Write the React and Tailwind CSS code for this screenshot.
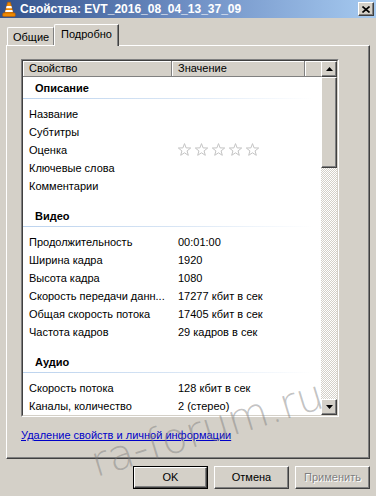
import React from "react";

const raised =
  "border border-t-white border-l-white border-r-[#404040] border-b-[#404040] shadow-[inset_-1px_-1px_0_#808080]";

function Star() {
  return (
    <svg width="15" height="14" viewBox="0 0 15 14" className="block">
      <polygon
        points="7.5,0.6 9.1,4.9 13.7,5 10.1,7.9 11.3,12.3 7.5,9.8 3.7,12.3 4.9,7.9 1.3,5 5.9,4.9"
        fill="white"
        stroke="#c4c4c4"
        strokeWidth="1"
        strokeLinejoin="round"
      />
    </svg>
  );
}

function VlcIcon() {
  return (
    <svg width="14" height="16" viewBox="0 0 14 16" className="block">
      <path d="M5.6 1.2 L8.4 1.2 L11.2 12 L2.8 12 Z" fill="#f08a00" stroke="#b85c00" strokeWidth="0.6" />
      <path d="M4.6 5 L9.4 5 L10 7.2 L4 7.2 Z" fill="#ffffff" />
      <path d="M3.6 9 L10.4 9 L10.9 11 L3.1 11 Z" fill="#ffffff" />
      <path d="M1 12 L13 12 L13.4 14.6 Q13.4 15.4 12.5 15.4 L1.5 15.4 Q0.6 15.4 0.6 14.6 Z" fill="#f08a00" stroke="#b85c00" strokeWidth="0.6" />
    </svg>
  );
}

function Row({ label, value, children }) {
  return (
    <div className="flex h-[18px] items-center">
      <div className="w-[149px] shrink-0 truncate pl-[6px] pr-[2px]">{label}</div>
      <div className="pl-[6px] whitespace-nowrap">{children ?? value}</div>
    </div>
  );
}

function Group({ title, first, children }) {
  return (
    <div className={first ? "mt-[2px]" : "mt-[12px]"}>
      <div className="flex h-[18px] items-center pl-[12px] font-bold">{title}</div>
      <div className="mt-px h-px w-[290px] bg-gradient-to-r from-[#bcd3ee] via-[#d6e4f4] to-white" />
      <div className="mt-[6px]">{children}</div>
    </div>
  );
}

function Button({ children, isDefault, disabled }) {
  const inner = (
    <div
      className={`flex h-full w-full items-center justify-center ${raised} ${
        disabled ? "text-[#808080] [text-shadow:1px_1px_0_#ffffff]" : "text-black"
      }`}
    >
      {children}
    </div>
  );
  if (isDefault) {
    return <div className="h-[23px] w-[75px] border border-black">{inner}</div>;
  }
  return <div className="h-[23px] w-[75px]">{inner}</div>;
}

export default function App() {
  return (
    <div className="relative h-[496px] w-[376px] overflow-hidden bg-[#d4d0c8] font-['Liberation_Sans',Arial,sans-serif] text-[11px] leading-[13px] text-black">
      {/* Title bar */}
      <div className="flex h-[18px] items-center bg-gradient-to-r from-[#33528c] via-[#6f8fc4] to-[#a6caf0] pl-[2px] pr-[2px]">
        <VlcIcon />
        <div className="ml-[4px] text-[12px] font-bold text-white whitespace-nowrap">
          Свойства: EVT_2016_08_04_13_37_09
        </div>
        <div className="ml-auto flex h-[14px] w-[16px] items-center justify-center bg-[#d4d0c8] border border-t-white border-l-white border-r-[#404040] border-b-[#404040] shadow-[inset_-1px_-1px_0_#808080]">
          <svg width="8" height="7" viewBox="0 0 8 7" className="block">
            <path d="M0.5 0.5 L7.5 6.5 M7.5 0.5 L0.5 6.5" stroke="black" strokeWidth="1.6" />
          </svg>
        </div>
      </div>

      {/* Tabs */}
      <div className="flex h-[27px] items-end pl-[7px]">
        <div className="h-[18px] w-[47px] rounded-tl-[2px] border-t border-l border-t-white border-l-white border-r border-r-[#808080] pl-[5px] pt-[3px]">
          Общие
        </div>
        <div className="relative z-10 -mb-px h-[22px] w-[65px] rounded-tl-[2px] border-t border-l border-t-white border-l-white border-r border-r-[#404040] bg-[#d4d0c8] pl-[6px] pt-[3px] shadow-[inset_-1px_0_0_#808080]">
          Подробно
        </div>
      </div>

      {/* Panel */}
      <div className={`ml-[6px] h-[414px] w-[364px] ${raised}`}>
        {/* List box */}
        <div className="ml-[14px] mt-[13px] h-[358px] w-[318px] border border-t-[#808080] border-l-[#808080] border-r-white border-b-white">
          <div className="flex h-full w-full border border-t-[#404040] border-l-[#404040] border-r-[#d4d0c8] border-b-[#d4d0c8] bg-white">
            <div className="flex min-w-0 flex-1 flex-col overflow-hidden">
              {/* Header */}
              <div className="flex h-[16px] shrink-0 bg-[#d4d0c8] border-b border-b-[#808080]">
                <div className="flex w-[149px] items-center border-r border-r-[#808080] pl-[6px] shadow-[inset_1px_1px_0_#ffffff]">
                  Свойство
                </div>
                <div className="flex w-[133px] items-center border-r border-r-[#808080] pl-[6px] shadow-[inset_1px_1px_0_#ffffff]">
                  Значение
                </div>
                <div className="flex-1 shadow-[inset_1px_1px_0_#ffffff]" />
              </div>

              <Group title="Описание" first>
                <Row label="Название" />
                <Row label="Субтитры" />
                <Row label="Оценка">
                  <div className="-ml-[1px] flex gap-[2px]">
                    <Star />
                    <Star />
                    <Star />
                    <Star />
                    <Star />
                  </div>
                </Row>
                <Row label="Ключевые слова" />
                <Row label="Комментарии" />
              </Group>

              <Group title="Видео">
                <Row label="Продолжительность" value="00:01:00" />
                <Row label="Ширина кадра" value="1920" />
                <Row label="Высота кадра" value="1080" />
                <Row label="Скорость передачи данн..." value="17277 кбит в сек" />
                <Row label="Общая скорость потока" value="17405 кбит в сек" />
                <Row label="Частота кадров" value="29 кадров в сек" />
              </Group>

              <Group title="Аудио">
                <Row label="Скорость потока" value="128 кбит в сек" />
                <Row label="Каналы, количество" value="2 (стерео)" />
              </Group>
            </div>

            {/* Scrollbar */}
            <div className="flex w-[16px] shrink-0 flex-col">
              <div className={`flex h-[16px] w-[16px] items-center justify-center bg-[#d4d0c8] ${raised}`}>
                <svg width="7" height="4" viewBox="0 0 7 4" className="block">
                  <path d="M3.5 0 L7 4 L0 4 Z" fill="black" />
                </svg>
              </div>
              <div className={`h-[91px] w-[16px] bg-[#d4d0c8] ${raised}`} />
              <div className="flex-1 bg-[repeating-conic-gradient(#ffffff_0%_25%,#d4d0c8_0%_50%)] bg-[length:2px_2px]" />
              <div className={`flex h-[16px] w-[16px] items-center justify-center bg-[#d4d0c8] ${raised}`}>
                <svg width="7" height="4" viewBox="0 0 7 4" className="block">
                  <path d="M0 0 L7 0 L3.5 4 Z" fill="black" />
                </svg>
              </div>
            </div>
          </div>
        </div>

        {/* Link */}
        <div className="ml-[14px] mt-[12px] text-[#0000c8] underline whitespace-nowrap">
          Удаление свойств и личной информации
        </div>
      </div>

      {/* Buttons */}
      <div className="mt-[7px] flex justify-end gap-[6px] pr-[6px]">
        <Button isDefault>OK</Button>
        <Button>Отмена</Button>
        <Button disabled>Применить</Button>
      </div>

      {/* Watermark */}
      <div className="pointer-events-none absolute left-[98px] top-[442px] origin-[0%_100%] -rotate-[17deg] font-['DejaVu_Sans',sans-serif] text-[42px] font-extralight leading-[42px] whitespace-nowrap text-[#7a7a7a]/45">
        ra-forum.ru
      </div>
    </div>
  );
}
